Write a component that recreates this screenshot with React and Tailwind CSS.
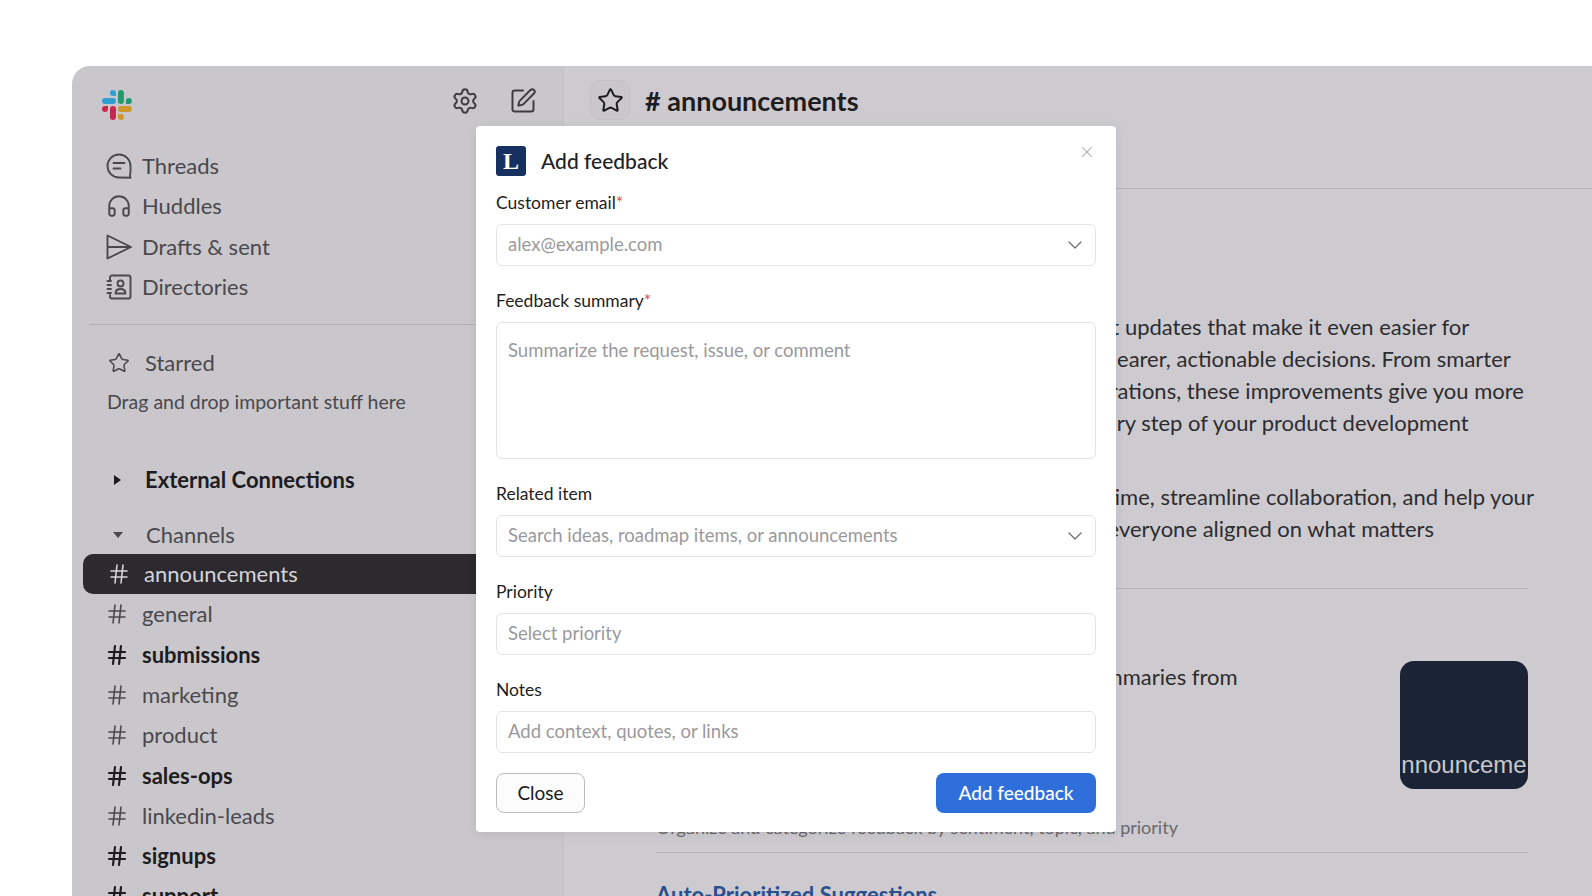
import { Settings, SquarePen, Star, Headphones, Hash, ChevronDown, X } from 'lucide-react'

const channels = [
    { name: 'general' },
    { name: 'submissions', bold: true },
    { name: 'marketing' },
    { name: 'product' },
    { name: 'sales-ops', bold: true },
    { name: 'linkedin-leads' },
    { name: 'signups', bold: true },
    { name: 'support', bold: true },
]

function SlackLogo() {
    return (
        <svg viewBox="0 0 54 54" className="w-[30px] h-[30px]">
            <path fill="#2f9fd2" d="M19.712.133a5.381 5.381 0 0 0-5.376 5.387 5.381 5.381 0 0 0 5.376 5.386h5.376V5.52A5.381 5.381 0 0 0 19.712.133m0 14.365H5.376A5.381 5.381 0 0 0 0 19.884a5.381 5.381 0 0 0 5.376 5.387h14.336a5.381 5.381 0 0 0 5.376-5.387 5.381 5.381 0 0 0-5.376-5.386" />
            <path fill="#219a6e" d="M53.76 19.884a5.381 5.381 0 0 0-5.376-5.386 5.381 5.381 0 0 0-5.376 5.386v5.387h5.376a5.381 5.381 0 0 0 5.376-5.387m-14.336 0V5.52A5.381 5.381 0 0 0 34.048.133a5.381 5.381 0 0 0-5.376 5.387v14.364a5.381 5.381 0 0 0 5.376 5.387 5.381 5.381 0 0 0 5.376-5.387" />
            <path fill="#d0982b" d="M34.048 54a5.381 5.381 0 0 0 5.376-5.387 5.381 5.381 0 0 0-5.376-5.386h-5.376v5.386A5.381 5.381 0 0 0 34.048 54m0-14.365h14.336a5.381 5.381 0 0 0 5.376-5.386 5.381 5.381 0 0 0-5.376-5.387H34.048a5.381 5.381 0 0 0-5.376 5.387 5.381 5.381 0 0 0 5.376 5.386" />
            <path fill="#c9274f" d="M0 34.249a5.381 5.381 0 0 0 5.376 5.386 5.381 5.381 0 0 0 5.376-5.386v-5.387H5.376A5.381 5.381 0 0 0 0 34.25m14.336-.001v14.364A5.381 5.381 0 0 0 19.712 54a5.381 5.381 0 0 0 5.376-5.387V34.25a5.381 5.381 0 0 0-5.376-5.387 5.381 5.381 0 0 0-5.376 5.387" />
        </svg>
    )
}

function ThreadsIcon() {
    return (
        <svg viewBox="0 0 26 26" fill="none" stroke="currentColor" strokeWidth="1.9" strokeLinecap="round" strokeLinejoin="round" className="w-[26px] h-[26px]">
            <path d="M13 1.5a11.5 11.5 0 1 0 0 23c2.4 0 4.7 0 11.5 0.3-1-1.5-.6-2.7-.2-4.3 .3-1 .2-2.4 .2-7.5A11.5 11.5 0 0 0 13 1.5z" />
            <path d="M7.5 10h11M7.5 15.5h7" />
        </svg>
    )
}

function SendIcon() {
    return (
        <svg viewBox="0 0 26 26" fill="none" stroke="currentColor" strokeWidth="1.9" strokeLinejoin="round" className="w-[26px] h-[26px]">
            <path d="M1.5 1.5 25 13 1.5 24.5z" />
            <path d="M1.5 13H25" />
        </svg>
    )
}

function DirectoryIcon() {
    return (
        <svg viewBox="0 0 26 26" fill="none" stroke="currentColor" strokeWidth="1.9" strokeLinecap="round" strokeLinejoin="round" className="w-[26px] h-[26px]">
            <path d="M4 6V3.5A2 2 0 0 1 6 1.5h16.5a2 2 0 0 1 2 2v19a2 2 0 0 1-2 2H6a2 2 0 0 1-2-2V21" />
            <path d="M1.5 7H5M1.5 11H5M1.5 15H5M1.5 19H5" />
            <circle cx="14.5" cy="9.5" r="3" />
            <path d="M9.5 19.5c0-3 2-4.5 5-4.5s5 1.5 5 4.5z" />
        </svg>
    )
}

function NavRow({ icon, label }) {
    return (
        <div className="h-[40.3px] flex items-center pl-[34px] text-[#4a484d]">
            <span className="w-[36px] flex-shrink-0 flex items-center">{icon}</span>
            <span className="text-[22px] leading-none">{label}</span>
        </div>
    )
}

function ChannelRow({ name, bold }) {
    return (
        <div className={bold ? 'h-[40.3px] flex items-center pl-[35px] text-[#1d1c1f] font-bold' : 'h-[40.3px] flex items-center pl-[35px] text-[#4a484d]'}>
            <Hash className="w-[24px] h-[24px] mr-[13px] -ml-[2px] flex-shrink-0" strokeWidth={bold ? 2.2 : 1.6} />
            <span className="text-[22px] leading-none">{name}</span>
        </div>
    )
}

function Sidebar() {
    return (
        <aside className="w-[492px] flex-shrink-0 bg-[#c9c7cb] border-r border-[#c4c2c6]">
            <div className="h-[66px] flex items-start justify-between pt-[21px] pl-[30px] pr-[26px]">
                <div className="mt-[3px]"><SlackLogo /></div>
                <div className="flex gap-[30px] text-[#3e3c41]">
                    <Settings className="w-[28px] h-[28px]" strokeWidth={1.7} />
                    <SquarePen className="w-[28px] h-[28px]" strokeWidth={1.7} />
                </div>
            </div>
            <div className="pt-[14px]">
                <NavRow icon={<ThreadsIcon />} label="Threads" />
                <NavRow icon={<Headphones className="w-[26px] h-[26px]" strokeWidth={1.8} />} label="Huddles" />
                <NavRow icon={<SendIcon />} label="Drafts & sent" />
                <NavRow icon={<DirectoryIcon />} label="Directories" />
            </div>
            <div className="h-px bg-[#b2b0b4] ml-[17px] mt-[17px]" />
            <div className="flex items-center pl-[36px] pt-[27px] text-[#4a484d]">
                <Star className="w-[22px] h-[22px] mr-[15px]" strokeWidth={1.7} />
                <span className="text-[22px] leading-[22px]">Starred</span>
            </div>
            <p className="pl-[35px] mt-[16px] text-[19.5px] leading-[24px] text-[#4a484d]">Drag and drop important stuff here</p>
            <div className="flex items-center pl-[42px] mt-[54px] text-[#1d1c1f] font-bold">
                <span className="w-0 h-0 border-y-[5px] border-y-transparent border-l-[7px] border-l-[#1d1c1f] mr-[24px]" />
                <span className="text-[22px] leading-[24px]">External Connections</span>
            </div>
            <div className="flex items-center pl-[41px] mt-[31px] text-[#4a484d]">
                <span className="w-0 h-0 border-x-[5.5px] border-x-transparent border-t-[6px] border-t-[#4a484d] mr-[23px]" />
                <span className="text-[22px] leading-[24px]">Channels</span>
            </div>
            <div className="ml-[11px] mt-[7px] h-[40px] bg-[#2c2a2e] rounded-l-[10px] flex items-center pl-[24px] text-[#d6d4d8]">
                <Hash className="w-[24px] h-[24px] mr-[13px] flex-shrink-0" strokeWidth={1.6} />
                <span className="text-[22px] leading-none">announcements</span>
            </div>
            <div>
                {channels.map(c => <ChannelRow key={c.name} name={c.name} bold={c.bold} />)}
            </div>
        </aside>
    )
}

function Main() {
    return (
        <main className="flex-1 min-w-0 bg-[#cdcbcf] text-[#2d2c30]">
            <div className="h-[123px] border-b border-[#b5b3b7] pt-[14px] pl-[26px]">
                <div className="flex items-center">
                    <div className="w-[40px] h-[40px] rounded-[10px] bg-[#c9c7cb] border border-[#c4c2c6] flex items-center justify-center text-[#1d1c1f]">
                        <Star className="w-[27px] h-[27px]" strokeWidth={1.8} />
                    </div>
                    <h1 className="ml-[15px] text-[27px] leading-none font-bold text-[#1d1c1f]"># announcements</h1>
                </div>
            </div>
            <div className="pl-[92px] pr-[64px] whitespace-nowrap">
                <div className="pt-[122px] text-[22px] leading-[32px]">
                    <p>We're excited to roll out a new round of product updates that make it even easier for</p>
                    <p>teams to collect customer feedback and make clearer, actionable decisions. From smarter</p>
                    <p>prioritization to deeper roadmap and idea integrations, these improvements give you more</p>
                    <p>visibility, control, and real confidence across every step of your product development</p>
                    <p>lifecycle.</p>
                </div>
                <div className="mt-[10px] text-[22px] leading-[32px]">
                    <p>These updates are designed to save your team time, streamline collaboration, and help your</p>
                    <p>team ship better products faster while keeping everyone aligned on what matters</p>
                </div>
                <div className="h-px bg-[#b5b3b7] mt-[43px]" />
                <div className="flex justify-between mt-[72px]">
                    <p className="text-[22px] leading-[32px] -mt-[0px]">Generate automatic, recurring theme-based summaries from</p>
                    <div className="w-[128px] h-[128px] rounded-[14px] bg-[#1b2336] overflow-hidden flex items-end justify-center pb-[12px] text-[#c8c8cc] text-[24px] leading-[24px] [font-family:'Liberation_Sans',sans-serif]">
                        <span>nnounceme</span>
                    </div>
                </div>
                <p className="mt-[26px] text-[18px] leading-[24px] text-[#6a686c]">Organize and categorize feedback by sentiment, topic, and priority</p>
                <div className="h-px bg-[#b5b3b7] mt-[13px]" />
                <p className="mt-[28px] text-[22px] leading-[28px] font-bold text-[#2a4f8f]">Auto-Prioritized Suggestions</p>
            </div>
        </main>
    )
}

function Field({ label, required, className, children }) {
    return (
        <div className={className}>
            <div className="text-[17.5px] leading-[24px] text-[#1f1e21] mb-[9px]">
                {label}{required && <span className="text-[#e5484d]">*</span>}
            </div>
            {children}
        </div>
    )
}

function FakeInput({ placeholder, caret }) {
    return (
        <div className="h-[42px] border border-[#e4e4e6] rounded-[6px] px-[11px] flex items-center justify-between text-[18.5px] text-[#9a9a9d]">
            <span>{placeholder}</span>
            {caret && <ChevronDown className="w-[24px] h-[24px] -mr-[3px] text-[#6e6e72]" strokeWidth={1.3} />}
        </div>
    )
}

function FeedbackModal() {
    return (
        <div className="absolute left-[476px] top-[126px] w-[640px] h-[706px] bg-white rounded-[4px] shadow-[0_2px_12px_rgba(0,0,0,0.08)] px-[20px] pt-[20px]">
            <div className="flex items-center h-[30px] relative">
                <div className="w-[30px] h-[30px] rounded-[3px] bg-[#163060] flex items-center justify-center text-white text-[24px] font-bold leading-none [font-family:'Liberation_Serif',serif]">L</div>
                <span className="ml-[15px] text-[21px] font-medium text-[#222124]">Add feedback</span>
                <X className="absolute right-[0px] -top-[3px] w-[18px] h-[18px] text-[#a3a3a6]" strokeWidth={1.4} />
            </div>
            <Field label="Customer email" required className="mt-[15px]">
                <FakeInput placeholder="alex@example.com" caret />
            </Field>
            <Field label="Feedback summary" required className="mt-[23px]">
                <div className="h-[137px] border border-[#e4e4e6] rounded-[6px] px-[11px] pt-[13px] text-[18.5px] leading-[28px] text-[#9a9a9d]">Summarize the request, issue, or comment</div>
            </Field>
            <Field label="Related item" className="mt-[23px]">
                <FakeInput placeholder="Search ideas, roadmap items, or announcements" caret />
            </Field>
            <Field label="Priority" className="mt-[23px]">
                <FakeInput placeholder="Select priority" />
            </Field>
            <Field label="Notes" className="mt-[23px]">
                <FakeInput placeholder="Add context, quotes, or links" />
            </Field>
            <div className="flex justify-between mt-[20px]">
                <button className="w-[89px] h-[40px] rounded-[8px] border border-[#bdbbbf] bg-[#fcfcfd] text-[19px] text-[#1a1a1c]">Close</button>
                <button className="w-[160px] h-[40px] rounded-[8px] bg-[#2f6fdc] text-[19px] font-medium text-white">Add feedback</button>
            </div>
        </div>
    )
}

export default function App() {
    return (
        <div className="relative h-[896px] overflow-hidden bg-white pt-[66px] pl-[72px] [font-family:Lato,sans-serif]">
            <div className="flex h-[830px] rounded-tl-[18px] overflow-hidden">
                <Sidebar />
                <Main />
            </div>
            <FeedbackModal />
        </div>
    )
}
